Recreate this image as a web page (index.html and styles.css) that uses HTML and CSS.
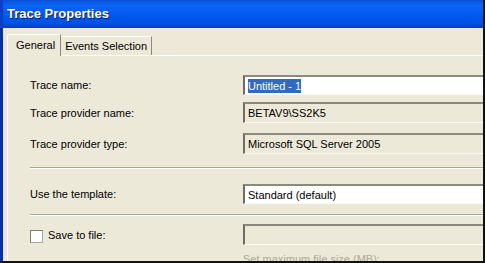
FILE: index.html
```
<!DOCTYPE html>
<html lang="en">
<head>
  <meta charset="UTF-8">
  <title>Trace Properties</title>
  <link rel="stylesheet" href="styles.css">
</head>
<body>
  <div class="screen">
    <div class="titlebar">Trace Properties</div>
    <div class="dialog">
      <div class="tabs">
        <div class="tab active">General</div>
        <div class="tab">Events Selection</div>
      </div>
      <div class="panel">
        <div class="row r1">
          <div class="label">Trace name:</div>
          <div class="field edit"><span class="sel">Untitled - 1</span></div>
        </div>
        <div class="row r2">
          <div class="label">Trace provider name:</div>
          <div class="field">BETAV9\SS2K5</div>
        </div>
        <div class="row r3">
          <div class="label">Trace provider type:</div>
          <div class="field">Microsoft SQL Server 2005</div>
        </div>
        <div class="sep s1"></div>
        <div class="row r4">
          <div class="label">Use the template:</div>
          <div class="field edit">Standard (default)</div>
        </div>
        <div class="sep s2"></div>
        <div class="row r5">
          <div class="label"><span class="check"></span>Save to file:</div>
          <div class="field"></div>
        </div>
        <div class="hint">Set maximum file size (MB):</div>
      </div>
    </div>
  </div>
</body>
</html>
```

FILE: styles.css
```
* {
  margin: 0;
  padding: 0;
  box-sizing: border-box;
}

body {
  background: #000;
  font-family: 'Liberation Sans', Arial, sans-serif;
  font-size: 11px;
  color: #000;
}

.screen {
  width: 485px;
  height: 263px;
  border-right: 2px solid #111;
  border-bottom: 2px solid #111;
  overflow: hidden;
  background: #ece9d8;
}

.titlebar {
  height: 28px;
  padding: 6px 0 0 4px;
  background: linear-gradient(#0a4fd6 0%, #0a64f4 20%, #0058ee 60%, #0050e0 85%, #0040c0 100%);
  color: #fff;
  font-weight: bold;
  font-size: 13px;
  text-shadow: 1px 1px 0 #0a1e6a;
  border-left: 3px solid #0a3fc8;
}

.dialog {
  border-left: 3px solid #0831a8;
  height: 235px;
  width: 520px;
  padding-left: 4px;
}

.tabs {
  display: flex;
  align-items: flex-end;
  height: 27px;
  padding-top: 6px;
}

.tab {
  height: 19px;
  padding: 3px 4px 0 4px;
  border-top: 1px solid #fff;
  border-right: 1px solid #8a887c;
}

.tab.active {
  height: 22px;
  padding: 4px 5px 0 8px;
  border-left: 1px solid #fff;
  border-right: 1px solid #8a887c;
  margin-bottom: -1px;
  background: #ece9d8;
  position: relative;
}

.panel {
  border-top: 1px solid #fff;
  border-left: 1px solid #fff;
  background: #ece9d8;
  padding: 18px 0 0 22px;
  height: 220px;
}

.row {
  display: flex;
  align-items: center;
  height: 21px;
}

.label {
  width: 213px;
  display: flex;
  align-items: center;
}

.field {
  flex: 1;
  height: 21px;
  border-top: 2px solid #8c8a7e;
  border-left: 2px solid #6f6d63;
  border-bottom: 1px solid #fbfaf6;
  padding: 3px 0 0 3px;
  white-space: nowrap;
}

.field.edit {
  background: #fff;
  height: 20px;
}

.sel {
  background: #316ac5;
  color: #fff;
  padding: 1px 0;
}

.r2 { margin-top: 7px; }
.r3 { margin-top: 10px; }
.r4 { margin-top: 14px; }
.r5 { margin-top: 8px; }

.sep {
  height: 2px;
  border-top: 1px solid #aca899;
  border-bottom: 1px solid #fff;
}

.s1 { margin-top: 13px; }
.s2 { margin-top: 10px; }

.check {
  width: 13px;
  height: 13px;
  background: #fff;
  border: 1px solid #a8a698;
  border-top-color: #7f7d72;
  border-left-color: #7f7d72;
  margin: 3px 5px 0 0;
}

.hint {
  margin: 8px 0 0 213px;
  color: #aca899;
}
```
